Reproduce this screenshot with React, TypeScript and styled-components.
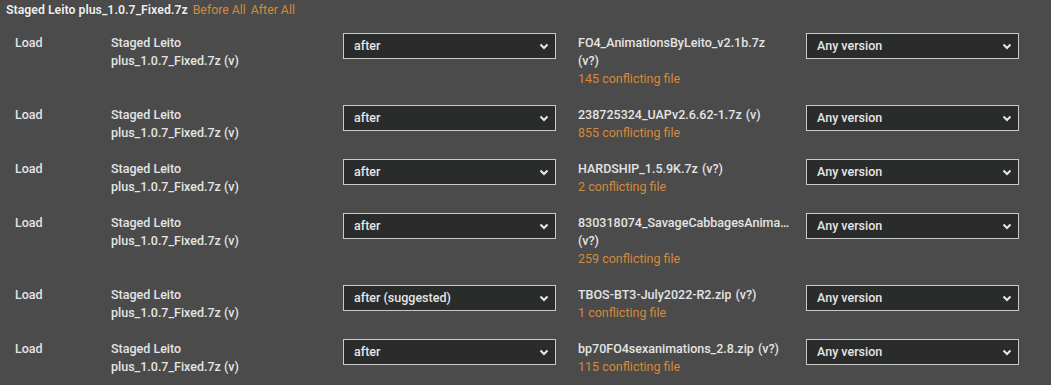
import * as React from "react";
import styled, { createGlobalStyle } from "styled-components";

const GlobalStyle = createGlobalStyle`
    html, body {
        margin: 0;
        padding: 0;
        background: #4b4b4b;
    }
    body {
        font-family: Roboto, "Liberation Sans", sans-serif;
        color: #e4e4e4;
    }
`;

const Page = styled.div`
    background: #4b4b4b;
    min-height: 385px;
    overflow: hidden;
`;

const Header = styled.div`
    display: flex;
    align-items: baseline;
    gap: 5px;
    padding: 1px 6px 0;
    line-height: 18px;
    font-size: 12.3px;
`;

const Title = styled.span`
    font-weight: 700;
    color: #ececec;
    text-shadow: 0 0 1px rgba(0, 0, 0, 0.7);
`;

const LinkText = styled.span`
    color: #d48a3d;
    cursor: pointer;
`;

const Rules = styled.div`
    padding: 14px 0 0 15px;
`;

const Row = styled.div`
    display: grid;
    grid-template-columns: 96px 232px 213px 250px 213px;
    align-items: start;
    padding-bottom: 17px;
    font-size: 12.5px;
    font-weight: 500;
    line-height: 18px;
`;

const Cell = styled.div<{ $indent?: number }>`
    padding-top: 1px;
    padding-left: ${p => p.$indent ?? 0}px;
    min-width: 0;
`;

const SourceName = styled.div`
    width: 140px;
`;

const Reference = styled.div`
    width: 212px;
    display: flex;
    flex-wrap: wrap;
    column-gap: 4px;
`;

const FileName = styled.span`
    max-width: 100%;
    overflow: hidden;
    text-overflow: ellipsis;
    white-space: nowrap;
`;

const Conflicts = styled.div`
    color: #d48a3d;
    font-weight: 400;
`;

const SelectBox = styled.div`
    position: relative;
    box-sizing: border-box;
    height: 26px;
    border: 1px solid #c9c9c9;
    background: #2a2b2b;
    display: flex;
    align-items: center;
    padding: 0 24px 0 10px;
    color: #e6e6e6;
    cursor: pointer;
`;

const Chevron = styled.svg`
    position: absolute;
    right: 6px;
    top: 9px;
`;

function Select(props: { value: string }) {
    return (
        <SelectBox>
            {props.value}
            <Chevron width="10" height="7" viewBox="0 0 10 7">
                <polyline
                    points="1.5,1.5 5,5 8.5,1.5"
                    fill="none"
                    stroke="#e8e8e8"
                    strokeWidth="2"
                />
            </Chevron>
        </SelectBox>
    );
}

interface Rule {
    order: string;
    file: string;
    version: string;
    conflicts: number;
}

const RULES: Rule[] = [
    { order: "after", file: "FO4_AnimationsByLeito_v2.1b.7z", version: "(v?)", conflicts: 145 },
    { order: "after", file: "238725324_UAPv2.6.62-1.7z", version: "(v)", conflicts: 855 },
    { order: "after", file: "HARDSHIP_1.5.9K.7z", version: "(v?)", conflicts: 2 },
    { order: "after", file: "830318074_SavageCabbagesAnimations.7z", version: "(v?)", conflicts: 259 },
    { order: "after (suggested)", file: "TBOS-BT3-July2022-R2.zip", version: "(v?)", conflicts: 1 },
    { order: "after", file: "bp70FO4sexanimations_2.8.zip", version: "(v?)", conflicts: 115 },
];

export default function App() {
    return (
        <Page>
            <GlobalStyle />
            <Header>
                <Title>Staged Leito plus_1.0.7_Fixed.7z</Title>
                <LinkText>Before All</LinkText>
                <LinkText>After All</LinkText>
            </Header>
            <Rules>
                {RULES.map((rule, i) => (
                    <Row key={i}>
                        <Cell>Load</Cell>
                        <Cell>
                            <SourceName>Staged Leito plus_1.0.7_Fixed.7z (v)</SourceName>
                        </Cell>
                        <Select value={rule.order} />
                        <Cell $indent={22}>
                            <Reference>
                                <FileName>{rule.file}</FileName>
                                <span>{rule.version}</span>
                            </Reference>
                            <Conflicts>{rule.conflicts} conflicting file</Conflicts>
                        </Cell>
                        <Select value="Any version" />
                    </Row>
                ))}
            </Rules>
        </Page>
    );
}
